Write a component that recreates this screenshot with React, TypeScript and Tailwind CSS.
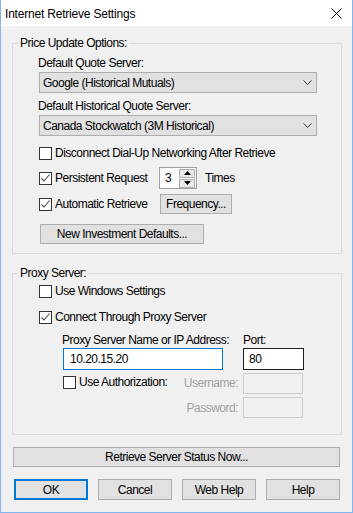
import React from "react";

// Win10-style dialog: "Internet Retrieve Settings"

function CheckBox({ checked }: { checked?: boolean }) {
  return (
    <span className="w-[13px] h-[13px] shrink-0 border border-[#333333] bg-white flex items-center justify-center">
      {checked && (
        <svg width="11" height="11" viewBox="0 0 11 11">
          <path d="M1.5 5.5 L4 8 L9.5 1.5" fill="none" stroke="#4a4a4a" strokeWidth="1.1" />
        </svg>
      )}
    </span>
  );
}

function Button({ children, className = "" }: { children: React.ReactNode; className?: string }) {
  return (
    <div className={`h-[20px] border border-[#adadad] bg-[#e1e1e1] flex items-center justify-center ${className}`}>
      {children}
    </div>
  );
}

function Combo({ value }: { value: string }) {
  return (
    <div className="w-[278px] h-[21px] mt-[1px] border border-[#adadad] bg-[#e1e1e1] flex items-center justify-between pl-[3px] pr-[4px]">
      <span>{value}</span>
      <svg width="9" height="6" viewBox="0 0 9 6">
        <path d="M0.5 0.5 L4.5 4.5 L8.5 0.5" fill="none" stroke="#333" strokeWidth="1" />
      </svg>
    </div>
  );
}

function CheckRow({ label, checked }: { label: string; checked?: boolean }) {
  return (
    <div className="flex items-center h-[16px]">
      <CheckBox checked={checked} />
      <span className="ml-[3px] leading-[16px] whitespace-nowrap">{label}</span>
    </div>
  );
}

export default function App() {
  return (
    <div className="w-[353px] h-[513px] bg-[#f0f0f0] border-x border-b border-[#7fb7ee] flex flex-col text-[12px] leading-[16px] tracking-[-0.5px] text-black font-['Liberation_Sans',Arial,sans-serif]">
      {/* title bar */}
      <div className="h-[26px] shrink-0 bg-white flex items-center justify-between pl-[4px] pr-[10px]">
        <span className="pt-[2px] tracking-[-0.2px]">Internet Retrieve Settings</span>
        <svg width="11" height="11" viewBox="0 0 11 11">
          <path d="M0.5 0.5 L10.5 10.5 M10.5 0.5 L0.5 10.5" stroke="#000" strokeWidth="1" />
        </svg>
      </div>

      <div className="flex-1 flex flex-col pl-[11px] pr-[10px]">
        {/* Price update group */}
        <fieldset className="mt-[9px] border border-[#dcdcdc] p-0 min-w-0">
          <legend className="ml-[5px] px-[2px] leading-[16px]">Price Update Options:</legend>
          <div className="pl-[26px] pt-[4px] pb-[9px] flex flex-col">
            <span className="-ml-[1px]">Default Quote Server:</span>
            <Combo value="Google (Historical Mutuals)" />
            <span className="-ml-[1px] mt-[5px]">Default Historical Quote Server:</span>
            <Combo value="Canada Stockwatch (3M Historical)" />

            <div className="mt-[9px]">
              <CheckRow label="Disconnect Dial-Up Networking After Retrieve" />
            </div>

            <div className="mt-[6px] flex items-center h-[22px]">
              <CheckBox checked />
              <span className="ml-[3px] w-[104px]">Persistent Request</span>
              <div className="w-[38px] h-[22px] border border-[#a0a0a0] bg-white flex items-center justify-between pl-[5px] pr-[1px]">
                <span>3</span>
                <div className="flex flex-col gap-[1px]">
                  <div className="w-[16px] h-[9px] border border-[#adadad] bg-[#e8e8e8] flex items-center justify-center">
                    <svg width="7" height="4" viewBox="0 0 7 4"><path d="M3.5 0 L7 4 L0 4 Z" fill="#000" /></svg>
                  </div>
                  <div className="w-[16px] h-[9px] border border-[#adadad] bg-[#e8e8e8] flex items-center justify-center">
                    <svg width="7" height="4" viewBox="0 0 7 4"><path d="M0 0 L7 0 L3.5 4 Z" fill="#000" /></svg>
                  </div>
                </div>
              </div>
              <span className="ml-[8px]">Times</span>
            </div>

            <div className="mt-[5px] flex items-center h-[20px]">
              <CheckBox checked />
              <span className="ml-[3px] w-[105px]">Automatic Retrieve</span>
              <Button className="w-[72px]">Frequency...</Button>
            </div>

            <Button className="mt-[10px] ml-[1px] w-[164px]">New Investment Defaults...</Button>
          </div>
        </fieldset>

        {/* Proxy group */}
        <fieldset className="mt-[11px] border border-[#dcdcdc] p-0 min-w-0">
          <legend className="ml-[5px] px-[2px] leading-[16px]">Proxy Server:</legend>
          <div className="pl-[26px] pt-[2px] pb-[16px] flex flex-col">
            <CheckRow label="Use Windows Settings" />
            <div className="mt-[10px]">
              <CheckRow label="Connect Through Proxy Server" checked />
            </div>

            <div className="ml-[24px] mt-[7px] grid grid-cols-[160px_61px] gap-x-[20px]">
              <span className="-ml-[1px] whitespace-nowrap">Proxy Server Name or IP Address:</span>
              <span>Port:</span>
              <div className="h-[22px] border border-[#0078d7] bg-white flex items-center pl-[6px]">10.20.15.20</div>
              <div className="h-[22px] border border-[#1e1e1e] bg-white flex items-center pl-[5px]">80</div>
            </div>

            <div className="ml-[24px] mt-[3px] grid grid-cols-[175px_60px] gap-x-[5px] gap-y-[3px]">
              <div className="flex items-start justify-between">
                <div className="mt-[1px]">
                  <CheckRow label="Use Authorization:" />
                </div>
                <span className="mt-[2px] text-[#a0a0a0]">Username:</span>
              </div>
              <div className="h-[21px] border border-[#cccccc] bg-[#f0f0f0]" />
              <div className="flex items-center justify-end">
                <span className="text-[#a0a0a0]">Password:</span>
              </div>
              <div className="h-[21px] border border-[#cccccc] bg-[#f0f0f0]" />
            </div>
          </div>
        </fieldset>

        <Button className="mt-[12px] ml-[1px] w-[327px]">Retrieve Server Status Now...</Button>

        <div className="mt-[12px] ml-[2px] flex gap-[10px]">
          <div className="w-[74px] h-[21px] border-2 border-[#0078d7] bg-[#e1e1e1] flex items-center justify-center">OK</div>
          <Button className="w-[74px] h-[21px]">Cancel</Button>
          <Button className="w-[74px] h-[21px]">Web Help</Button>
          <Button className="w-[74px] h-[21px]">Help</Button>
        </div>
      </div>
    </div>
  );
}
